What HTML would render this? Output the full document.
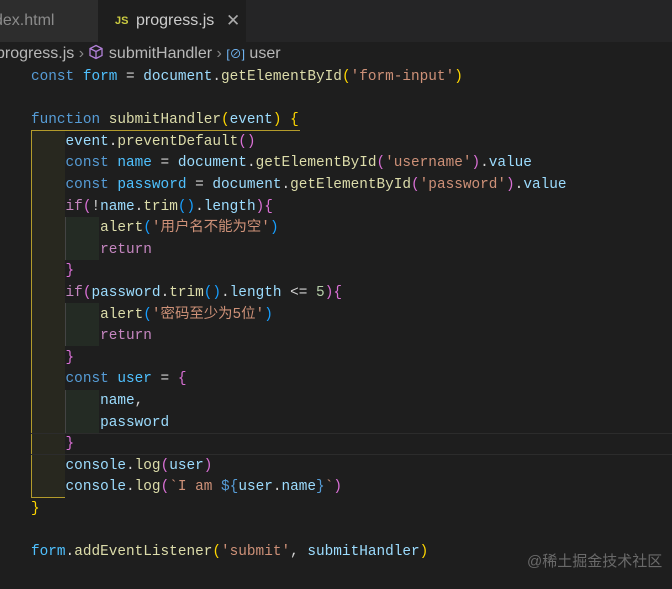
<!DOCTYPE html>
<html><head><meta charset="utf-8"><style>
*{margin:0;padding:0;box-sizing:border-box}
body{width:672px;height:589px;background:#1e1e1e;overflow:hidden;position:relative;font-family:"Liberation Sans","Noto Sans CJK SC",sans-serif}
.tabs{position:absolute;left:0;top:0;width:672px;height:42px;background:#252526}
.tab1{position:absolute;left:0;top:0;width:98px;height:42px;background:#2d2d2d;color:#8b8b8b;font-size:16px;line-height:42px;text-indent:-6px}
.tab2{position:absolute;left:98px;top:0;width:148px;height:42px;background:#1e1e1e;color:#ccc;font-size:16px;line-height:42px}
.js{position:absolute;left:17px;color:#cbcb41;font-size:11px;font-weight:bold}
.crumb{position:absolute;top:44px;left:-4px;color:#b8b8b8;font-size:16px;line-height:20px;white-space:nowrap}
.code{position:absolute;left:31px;top:67px;font-family:"Liberation Mono","Noto Sans CJK SC",monospace;font-size:14.4px;line-height:21.6px;color:#d4d4d4;white-space:pre}
.k{color:#569cd6}.v{color:#4fc1ff}.f{color:#dcdcaa}.s{color:#ce9178}.g{color:#ffd700}.p{color:#da70d6}.b{color:#179fff}.c{color:#c586c0}.w{color:#9cdcfe}
.box{position:absolute;left:31px;top:131px;width:34px;height:367px;background:#28281f;border-left:1px solid #b39b2b;border-bottom:1px solid #b39b2b}
.boxtop{position:absolute;left:31px;top:130px;width:269px;height:1px;background:#b39b2b}
.ig{position:absolute;left:65px;width:34px;height:43px;background:#242b24;border-left:1px solid #444}
.cur{position:absolute;left:31px;top:433px;width:641px;height:22px;border-top:1px solid #2c2c2c;border-bottom:1px solid #2c2c2c}
.wm{position:absolute;left:527px;top:552px;color:#6a6a6a;font-size:15px;line-height:20px}
</style></head><body>
<div class="tabs">
<div class="tab1">dex.html</div>
<div class="tab2"><span class="js">JS</span><span style="position:absolute;left:38px">progress.js</span><span style="position:absolute;left:128px;color:#aaa;font-size:17px">✕</span></div>
</div>
<div class="crumb">progress.js <span style="color:#888">›</span> <svg width="16" height="16" viewBox="0 0 16 16" style="vertical-align:-2px"><path d="M8 1.5 14 4.5v7L8 14.5 2 11.5v-7z M2 4.5 8 7.5 14 4.5 M8 7.5v7" fill="none" stroke="#b180d7" stroke-width="1.3"/></svg> submitHandler <span style="color:#888">›</span> <span style="color:#75beff;font-size:12px">[⊘]</span> user</div>
<div class="box"></div><div class="boxtop"></div>
<div class="ig" style="top:217px"></div>
<div class="ig" style="top:303px"></div>
<div class="ig" style="top:390px"></div>
<div class="cur"></div>
<div class="code"><span class="k">const</span> <span class="v">form</span> = <span class="w">document</span>.<span class="f">getElementById</span><span class="g">(</span><span class="s">'form-input'</span><span class="g">)</span>

<span class="k">function</span> <span class="f">submitHandler</span><span class="g">(</span><span class="w">event</span><span class="g">)</span> <span class="g">{</span>
    <span class="w">event</span>.<span class="f">preventDefault</span><span class="p">()</span>
    <span class="k">const</span> <span class="v">name</span> = <span class="w">document</span>.<span class="f">getElementById</span><span class="p">(</span><span class="s">'username'</span><span class="p">)</span>.<span class="w">value</span>
    <span class="k">const</span> <span class="v">password</span> = <span class="w">document</span>.<span class="f">getElementById</span><span class="p">(</span><span class="s">'password'</span><span class="p">)</span>.<span class="w">value</span>
    <span class="c">if</span><span class="p">(</span>!<span class="w">name</span>.<span class="f">trim</span><span class="b">()</span>.<span class="w">length</span><span class="p">){</span>
        <span class="f">alert</span><span class="b">(</span><span class="s">'用户名不能为空'</span><span class="b">)</span>
        <span class="c">return</span>
    <span class="p">}</span>
    <span class="c">if</span><span class="p">(</span><span class="w">password</span>.<span class="f">trim</span><span class="b">()</span>.<span class="w">length</span> &lt;= <span style="color:#b5cea8">5</span><span class="p">){</span>
        <span class="f">alert</span><span class="b">(</span><span class="s">'密码至少为5位'</span><span class="b">)</span>
        <span class="c">return</span>
    <span class="p">}</span>
    <span class="k">const</span> <span class="v">user</span> = <span class="p">{</span>
        <span class="w">name</span>,
        <span class="w">password</span>
    <span class="p">}</span>
    <span class="w">console</span>.<span class="f">log</span><span class="p">(</span><span class="w">user</span><span class="p">)</span>
    <span class="w">console</span>.<span class="f">log</span><span class="p">(</span><span class="s">`I am </span><span class="k">${</span><span class="w">user</span>.<span class="w">name</span><span class="k">}</span><span class="s">`</span><span class="p">)</span>
<span class="g">}</span>

<span class="v">form</span>.<span class="f">addEventListener</span><span class="g">(</span><span class="s">'submit'</span>, <span class="w">submitHandler</span><span class="g">)</span></div>
<div class="wm">@稀土掘金技术社区</div>
</body></html>
